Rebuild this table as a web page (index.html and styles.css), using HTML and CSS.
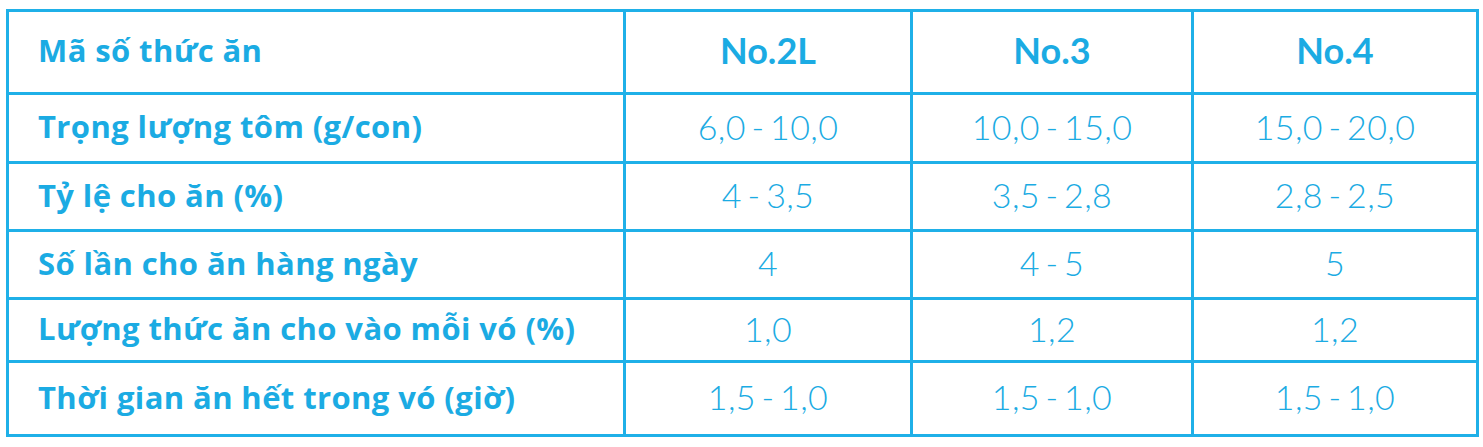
FILE: index.html
```html
<!DOCTYPE html>
<html lang="vi">
<head>
<meta charset="utf-8">
<title>Bảng cho ăn</title>
<link rel="stylesheet" href="styles.css">
</head>
<body>
<div class="wrap">
<table class="feed">
  <colgroup>
    <col class="c-label">
    <col class="c-2l">
    <col class="c-3">
    <col class="c-4">
  </colgroup>
  <tr class="r-head">
    <th class="label">Mã số thức ăn</th>
    <th class="code">No.2L</th>
    <th class="code">No.3</th>
    <th class="code">No.4</th>
  </tr>
  <tr class="r1">
    <th class="label">Trọng lượng tôm (g/con)</th>
    <td>6,0 - 10,0</td>
    <td>10,0 - 15,0</td>
    <td>15,0 - 20,0</td>
  </tr>
  <tr class="r2">
    <th class="label">Tỷ lệ cho ăn (%)</th>
    <td>4 - 3,5</td>
    <td>3,5 - 2,8</td>
    <td>2,8 - 2,5</td>
  </tr>
  <tr class="r3">
    <th class="label">Số lần cho ăn hàng ngày</th>
    <td>4</td>
    <td>4 - 5</td>
    <td>5</td>
  </tr>
  <tr class="r4">
    <th class="label">Lượng thức ăn cho vào mỗi vó (%)</th>
    <td>1,0</td>
    <td>1,2</td>
    <td>1,2</td>
  </tr>
  <tr class="r5">
    <th class="label">Thời gian ăn hết trong vó (giờ)</th>
    <td>1,5 - 1,0</td>
    <td>1,5 - 1,0</td>
    <td>1,5 - 1,0</td>
  </tr>
</table>
</div>
</body>
</html>
```

FILE: styles.css
```css
html, body {
  margin: 0;
  padding: 0;
  background: #ffffff;
}

.wrap {
  padding: 9px 6px 0 6px;
}

.feed {
  border-collapse: collapse;
  width: 1470px;
  table-layout: fixed;
  font-family: Lato, "Open Sans", "Noto Sans", sans-serif;
  color: #1babe3;
}

.c-label { width: 617px; }
.c-2l { width: 287px; }
.c-3 { width: 281px; }
.c-4 { width: 285px; }

.feed th,
.feed td {
  border: 3px solid #1fb0e8;
  padding: 0 0 4px 0;
  vertical-align: middle;
}

.feed .label {
  text-align: left;
  padding-left: 29px;
  font-family: "Open Sans", Lato, sans-serif;
  font-weight: 700;
  font-size: 31px;
  letter-spacing: 0.4px;
}

.feed .code {
  text-align: center;
  font-weight: 700;
  font-size: 36px;
}

.feed td {
  text-align: center;
  font-weight: 300;
  font-size: 34px;
  letter-spacing: 0.4px;
  word-spacing: -4px;
}

.r-head { height: 83px; }
.r1 { height: 69px; }
.r2 { height: 68px; }
.r3 { height: 68px; }
.r4 { height: 63px; }
.r5 { height: 74px; }
```
